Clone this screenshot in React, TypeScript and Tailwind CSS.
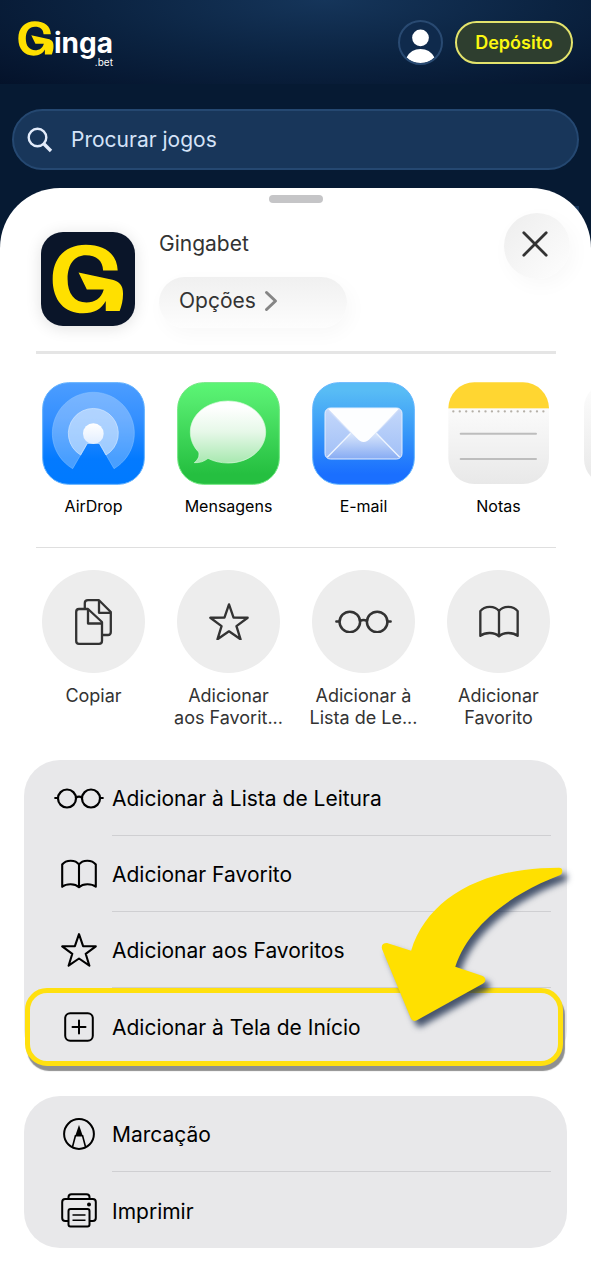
import type { ReactNode } from "react";

const GingaMark = ({ className }: { className?: string }) => (
  <svg viewBox="156 190 217 211" className={className} fill="#ffe000" aria-hidden="true">
    <path d="M354 270C352 221 317 192 258 192C196 192 158 232 158 296C158 360 194 399 250 399C283 399 305 386 318 362V392H360C366 376 370 360 370 342C371 316 360 303 338 298L236 276L261 327H312C304 355 284 366 260 366C224 366 203 340 203 296C203 250 225 224 258 224C290 224 309 240 310 270Z" />
  </svg>
);

type IconProps = { className?: string };

const Glasses = ({ className }: IconProps) => (
  <svg viewBox="0 0 50 21" className={className} fill="none" stroke="currentColor" strokeWidth="2.2" strokeLinecap="round">
    <circle cx="13" cy="10.5" r="9" />
    <circle cx="37" cy="10.5" r="9" />
    <path d="M22 9.5q3-1.6 6 0M1.2 10h2.6M46.2 10h2.6" />
  </svg>
);

const Book = ({ className }: IconProps) => (
  <svg viewBox="0 0 36 30" className={className} fill="none" stroke="currentColor" strokeWidth="2.1" strokeLinejoin="round">
    <path d="M1.2 27.8V5.5C5 .4 14.5.4 18 5.5C21.5.4 31 .4 34.8 5.5V27.8C30.5 24.3 22 24.3 18 28.2C14 24.3 5.5 24.3 1.2 27.8ZM18 5.5V28" />
  </svg>
);

const Star = ({ className }: IconProps) => (
  <svg viewBox="0 0 36 34" className={className} fill="none" stroke="currentColor" strokeWidth="2.1" strokeLinejoin="round">
    <path d="M18 1.2L22.1 13.1L34.8 13.3L24.7 20.8L28.4 32.7L18 25.5L7.6 32.7L11.3 20.8L1.2 13.3L13.9 13.1Z" />
  </svg>
);

const Copy = ({ className }: IconProps) => (
  <svg viewBox="0 0 37 46" className={className} fill="none" stroke="currentColor" strokeWidth="2.3" strokeLinejoin="round">
    <path d="M4 10H13L27 23V42Q27 44.8 24 44.8H4Q1.2 44.8 1.2 42V13Q1.2 10 4 10Z" />
    <path d="M13 10V24.5H27" />
    <path d="M9.8 10V4Q9.8 1.2 13 1.2H24L35.8 13V33Q35.8 36 33 36H27M24 1.2V13.8H36" />
  </svg>
);

const PlusBox = () => (
  <svg viewBox="0 0 30 30" className="w-[30px]" fill="none" stroke="currentColor" strokeWidth="2" strokeLinecap="round">
    <rect x="1.2" y="1.2" width="27.6" height="27.6" rx="5" />
    <path d="M15 8.5v13M8.5 15h13" />
  </svg>
);

const Markup = () => (
  <svg viewBox="0 0 32 32" className="w-8" fill="none" stroke="currentColor" strokeWidth="2">
    <circle cx="16" cy="16" r="14.9" />
    <path d="M9.4 29.2L12.4 17.8H19.6L22.6 29.2" strokeWidth="1.6" />
    <path d="M16 7L12.2 18H19.8Z" fill="currentColor" stroke="none" />
  </svg>
);

const Printer = () => (
  <svg viewBox="0 0 36 35" className="w-9" fill="none" stroke="currentColor" strokeWidth="2">
    <path d="M7.5 6V4Q7.5 1.2 10.5 1.2H25.5Q28.5 1.2 28.5 4V6M7.5 28H4.2Q1.2 28 1.2 25V9Q1.2 6 4.2 6H31.8Q34.8 6 34.8 9V25Q34.8 28 31.8 28H28.5" />
    <rect x="7.5" y="16" width="21" height="17.5" rx="2" />
    <path d="M11.5 22H24.5M11.5 27.2H24.5" strokeWidth="1.5" />
    <circle cx="28" cy="11.5" r="2" fill="currentColor" stroke="none" />
  </svg>
);

const AirDropTile = () => (
  <svg viewBox="0 0 309 309" className="w-full">
    <defs>
      <linearGradient id="air" x1="0" y1="0" x2="0" y2="1">
        <stop offset="0" stopColor="#4c9dff" />
        <stop offset=".35" stopColor="#3590ff" />
        <stop offset=".75" stopColor="#037aff" />
        <stop offset="1" stopColor="#007aff" />
      </linearGradient>
      <linearGradient id="airDot" x1="0" y1="0" x2="0" y2="1">
        <stop offset="0" stopColor="#fff" />
        <stop offset="1" stopColor="#e2eeff" />
      </linearGradient>
    </defs>
    <rect x="2" y="2" width="305" height="305" rx="78" fill="url(#air)" stroke="#5fb0ff" strokeWidth="3" />
    <path d="M136 184L92 260A123 123 0 1 1 216 260L172 184Z" fill="#fff" fillOpacity=".28" stroke="#8fc6ff" strokeOpacity=".7" strokeWidth="2" />
    <path d="M136 184L116 219A75 75 0 1 1 192 219L172 184Z" fill="#fff" fillOpacity=".45" stroke="#d5e9ff" strokeWidth="2" />
    <circle cx="154" cy="155" r="31" fill="url(#airDot)" />
  </svg>
);

const MessagesTile = () => (
  <svg viewBox="0 0 309 309" className="w-full">
    <defs>
      <linearGradient id="msg" x1="0" y1="0" x2="0" y2="1">
        <stop offset="0" stopColor="#5bf675" />
        <stop offset=".2" stopColor="#53e96c" />
        <stop offset=".9" stopColor="#25bf40" />
      </linearGradient>
      <linearGradient id="bubble" x1="0" y1="0" x2="0" y2="1">
        <stop offset=".1" stopColor="#fff" />
        <stop offset=".5" stopColor="#e6f8e8" />
        <stop offset="1" stopColor="#a8e8b0" />
      </linearGradient>
    </defs>
    <rect x="2" y="2" width="305" height="305" rx="78" fill="url(#msg)" stroke="#6fe77f" strokeWidth="3" />
    <path d="M153 57C216 57 266 98 266 150S216 243 153 243C131 243 110 238 93 229C82 238 68 243 52 242C64 232 68 223 65 210C49 194 40 173 40 150C40 98 90 57 153 57Z" fill="url(#bubble)" stroke="#d9fadd" strokeWidth="2" />
  </svg>
);

const MailTile = () => (
  <svg viewBox="0 0 309 309" className="w-full">
    <defs>
      <linearGradient id="mail" x1="0" y1="0" x2="0" y2="1">
        <stop offset=".08" stopColor="#58bcf5" />
        <stop offset=".5" stopColor="#3797f8" />
        <stop offset=".9" stopColor="#1a6fff" />
      </linearGradient>
      <linearGradient id="envelope" x1="0" y1="0" x2="0" y2="1">
        <stop offset="0" stopColor="#c9d8f8" />
        <stop offset=".5" stopColor="#d8e5fb" />
        <stop offset="1" stopColor="#86abf3" />
      </linearGradient>
      <linearGradient id="side" x1="0" y1="0" x2="0" y2="1">
        <stop offset="0" stopColor="#c3d7fa" />
        <stop offset="1" stopColor="#a2c0f7" />
      </linearGradient>
    </defs>
    <rect x="2" y="2" width="305" height="305" rx="78" fill="url(#mail)" stroke="#62b5ff" strokeWidth="3" />
    <rect x="39" y="78" width="231" height="153" rx="16" fill="url(#envelope)" />
    <path d="M45 84L116 154L45 226Q39 222 39 214V94ZM264 84L193 154L264 226Q270 222 270 214V94Z" fill="url(#side)" />
    <path d="M46 226L116 154M263 226L193 154" stroke="#eef5ff" strokeWidth="4" />
    <path d="M48 80Q51 78 56 78H254Q258 78 261 80L176 168Q155 192 134 168Z" fill="#fdfeff" />
    <rect x="39" y="78" width="231" height="153" rx="16" fill="none" stroke="#e3eeff" strokeWidth="3" />
  </svg>
);

const NotesTile = () => (
  <svg viewBox="0 0 309 309" className="w-full">
    <defs>
      <linearGradient id="paper" x1="0" y1="0" x2="0" y2="1">
        <stop offset=".25" stopColor="#fbfbfb" />
        <stop offset="1" stopColor="#e8e8e8" />
      </linearGradient>
      <clipPath id="notes">
        <rect x="4" y="1" width="302" height="305" rx="78" />
      </clipPath>
    </defs>
    <g clipPath="url(#notes)">
      <rect width="309" height="309" fill="url(#paper)" />
      <rect width="309" height="79" fill="#ffd631" />
    </g>
    <path d="M19 88H300" stroke="#b5b0a8" strokeWidth="7" strokeLinecap="round" strokeDasharray="0 19.3" />
    <path d="M41 155H267M41 231H267" stroke="#bdbdbd" strokeWidth="6" strokeLinecap="round" />
  </svg>
);

const apps = [
  { name: "AirDrop", tile: <AirDropTile /> },
  { name: "Mensagens", tile: <MessagesTile /> },
  { name: "E-mail", tile: <MailTile /> },
  { name: "Notas", tile: <NotesTile /> },
];

const actions = [
  { lines: ["Copiar"], icon: <Copy className="w-[37px]" /> },
  { lines: ["Adicionar", "aos Favorit..."], icon: <Star className="w-10" /> },
  { lines: ["Adicionar à", "Lista de Le..."], icon: <Glasses className="w-[57px]" /> },
  { lines: ["Adicionar", "Favorito"], icon: <Book className="w-10" /> },
];

const Row = ({ icon, label, last }: { icon: ReactNode; label: string; last?: boolean }) => (
  <li>
    <button className="flex h-[76px] w-full items-center pr-4 pl-[22px] text-left">
      <span className="flex w-[66px] shrink-0 justify-center">{icon}</span>
      <span className={last ? "flex h-full flex-1 items-center pt-[3px]" : "flex h-full flex-1 items-center border-b border-[#cfcfd2] pt-[3px]"}>
        {label}
      </span>
    </button>
  </li>
);

const Arrow = () => (
  <svg
    viewBox="94 82 544 464"
    className="pointer-events-none absolute top-[107px] right-1 w-[182px] overflow-visible drop-shadow-[5px_6px_3px_#1e2f4dcc]"
    fill="#ffe000"
    aria-hidden="true"
  >
    <path d="M626 84Q636 84 636 94Q636 103 628 107C470 168 356 262 316 380L396 407Q406 411 406 420Q406 427 398 431L200 541Q188 546 183 534L97 327Q93 309 112 309L184 332C232 178 390 84 626 84Z" />
  </svg>
);

export default function App() {
  return (
    <div className="min-h-screen bg-[#061a33] font-[Inter,'Liberation_Sans',sans-serif]">
      <header className="flex h-[84px] items-center justify-between bg-[radial-gradient(ellipse_at_55%_0%,#15355a_0%,#0b2341_50%,#04122a_100%)] px-[18px]">
        <a href="#" aria-label="Ginga.bet" className="flex items-start pt-1">
          <GingaMark className="w-9" />
          <span className="flex flex-col items-end pt-2 text-white">
            <span className="text-[28px] leading-7 font-bold">inga</span>
            <span className="text-[10px] leading-[10px]">.bet</span>
          </span>
        </a>
        <div className="flex items-center gap-3">
          <button aria-label="Perfil" className="size-[45px] overflow-hidden rounded-full border-2 border-[#294a72] bg-[#0f2a4c]">
            <svg viewBox="0 0 44 44" fill="#fff" className="w-full">
              <circle cx="22" cy="17" r="9" />
              <path d="M7 38Q12 29 22 29T37 38Q31 44 22 44T7 38Z" />
            </svg>
          </button>
          <button className="h-[43px] w-[118px] rounded-full border-2 border-[#e3e36c] bg-[#2e3e2f] text-[18px] font-semibold text-[#fbf711]">
            Depósito
          </button>
        </div>
      </header>

      <div className="px-3 pt-[25px]">
        <label className="flex h-[61px] items-center gap-[18px] rounded-full border-2 border-[#254871] bg-[#18365a] px-[13px]">
          <svg viewBox="0 0 26 26" className="w-[26px]" fill="none" stroke="#e3ecfb" strokeWidth="2.4">
            <circle cx="10.5" cy="10.5" r="8.8" />
            <path d="M16.8 16.8L24 24" strokeWidth="3.4" />
          </svg>
          <input
            type="search"
            aria-label="Procurar jogos"
            placeholder="Procurar jogos"
            className="min-w-0 flex-1 bg-transparent text-[21px] text-white outline-none placeholder:text-[#d5e3f8]"
          />
        </label>
      </div>

      <div className="mx-3 mt-9 h-10 rounded-tl-lg bg-[#18365a]" />

      <main className="relative -mt-[58px] overflow-hidden rounded-t-[60px] bg-white pt-[7px] pb-8 text-[#333]">
        <div className="mx-auto h-2 w-[54px] rounded-full bg-[#c5c5c7]" />

        <section className="flex items-start pt-[10px] pr-[21px] pl-[41px]">
          <div className="mt-[19px] flex size-[94px] shrink-0 items-center justify-center rounded-[22px] bg-[#0a1529] shadow-[0_2px_16px_#0000001f]">
            <GingaMark className="w-[72px]" />
          </div>
          <div className="mt-[19px] ml-6 flex-1">
            <h1 className="text-[21px] leading-6">Gingabet</h1>
            <button className="mt-[21px] flex h-[51px] w-[188px] items-center gap-2 rounded-full bg-linear-to-b from-[#f0f0f0] to-[#fdfdfd] pb-1 pl-5 text-[21px] shadow-[4px_6px_20px_#00000008]">
              Opções
              <svg viewBox="0 0 14 22" className="w-[14px]" fill="none" stroke="#858585" strokeWidth="3" strokeLinecap="round" strokeLinejoin="round">
                <path d="M2.5 2.5L11.5 11L2.5 19.5" />
              </svg>
            </button>
          </div>
          <button
            aria-label="Fechar"
            className="flex size-[66px] items-center justify-center rounded-full bg-linear-to-br from-[#ededed] to-[#fefefe] pr-1 pb-1 shadow-[4px_6px_20px_#00000008]"
          >
            <svg viewBox="0 0 26 26" className="w-[26px]" fill="none" stroke="#333" strokeWidth="2.8" strokeLinecap="round">
              <path d="M1.8 1.8L24.2 24.2M24.2 1.8L1.8 24.2" />
            </svg>
          </button>
        </section>

        <hr className="mt-[23px] mr-[35px] ml-9 h-[3px] border-0 bg-[#e5e5e5]" />

        <ul className="mt-7 flex gap-8 overflow-hidden pl-[42px]">
          {apps.map((app) => (
            <li key={app.name} className="w-[103px] shrink-0">
              <button className="flex w-full flex-col items-center gap-[11px] text-[16px] leading-5 text-black">
                {app.tile}
                {app.name}
              </button>
            </li>
          ))}
          <li className="w-[103px] shrink-0 pl-[2px]">
            <div className="h-[103px] rounded-[26px] bg-linear-to-b from-[#fdfdfd] to-[#e8e8e8]" />
          </li>
        </ul>

        <hr className="mt-[31px] mr-[35px] ml-9 h-px border-0 bg-[#dfdfdf]" />

        <ul className="mt-[22px] flex gap-8 overflow-hidden pl-[42px]">
          {actions.map((action) => (
            <li key={action.lines.join(" ")} className="w-[103px] shrink-0">
              <button className="flex w-full flex-col items-center gap-3">
                <span className="flex size-[103px] items-center justify-center rounded-full bg-[#ededed]">{action.icon}</span>
                <span className="flex flex-col items-center text-[18px] leading-[22px] whitespace-nowrap">
                  {action.lines.map((line) => (
                    <span key={line}>{line}</span>
                  ))}
                </span>
              </button>
            </li>
          ))}
        </ul>

        <div className="relative mx-6 mt-[31px] rounded-[36px] bg-[#e8e8ea] text-[21px] text-black">
          <ul>
            <Row icon={<Glasses className="w-[50px]" />} label="Adicionar à Lista de Leitura" />
            <Row icon={<Book className="w-9" />} label="Adicionar Favorito" />
            <Row icon={<Star className="w-9" />} label="Adicionar aos Favoritos" />
            <li className="mr-1 ml-px">
              <button className="flex h-[78px] w-full items-center rounded-[22px] border-[5px] border-[#ffe00f] bg-[#e8e8ea] pl-4 text-left shadow-[2px_5px_1px_#8f9090]">
                <span className="flex w-[66px] shrink-0 justify-center">
                  <PlusBox />
                </span>
                <span className="pt-[2px]">Adicionar à Tela de Início</span>
              </button>
            </li>
          </ul>
          <Arrow />
        </div>

        <ul className="mx-6 mt-[30px] rounded-[36px] bg-[#e8e8ea] text-[21px] text-black">
          <Row icon={<Markup />} label="Marcação" />
          <Row icon={<Printer />} label="Imprimir" last />
        </ul>
      </main>
    </div>
  );
}
